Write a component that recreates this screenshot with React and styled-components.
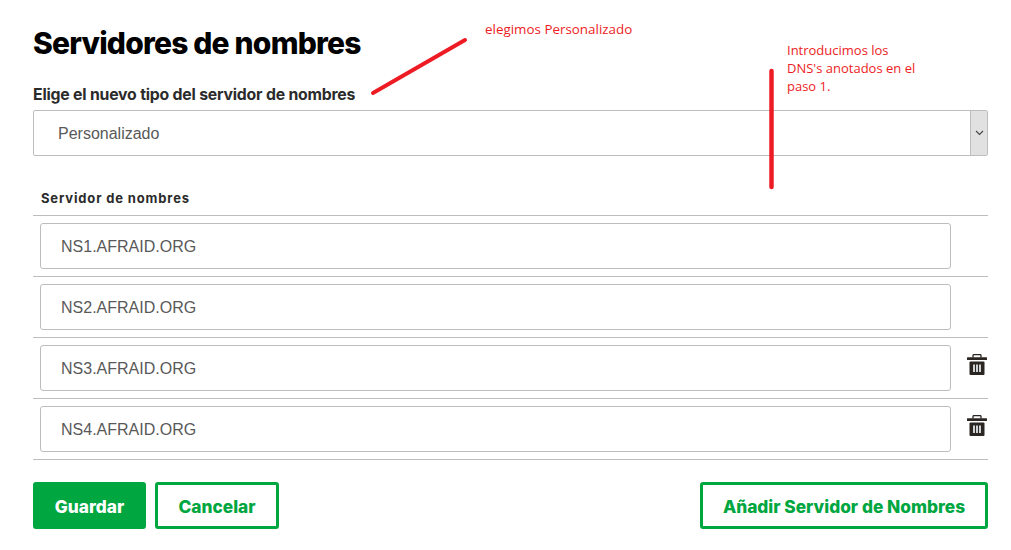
import React from 'react';
import styled, { createGlobalStyle } from 'styled-components';

const GlobalStyle = createGlobalStyle`
  html, body {
    margin: 0;
    background: #fff;
    overflow: hidden;
  }
`;

const Page = styled.div`
  position: relative;
  box-sizing: border-box;
  width: 1011px;
  height: 550px;
  padding: 24px 23px 0 33px;
  font-family: "Liberation Sans", Arial, sans-serif;
`;
const Title = styled.h1`
  margin: 0;
  height: 38px;
  font-family: Inter, sans-serif;
  font-size: 30px;
  line-height: 38px;
  font-weight: 800;
  letter-spacing: -0.8px;
  color: #000;
`;
const SelectLabel = styled.label`
  display: block;
  margin-top: 23px;
  height: 20px;
  font-family: Inter, sans-serif;
  font-size: 15.8px;
  line-height: 20px;
  font-weight: 700;
  letter-spacing: -0.2px;
  color: #2b2b2b;
`;
const SelectBox = styled.div`
  display: flex;
  align-items: stretch;
  box-sizing: border-box;
  height: 46px;
  margin-top: 5px;
  border: 1px solid #bdbdbd;
  border-radius: 2px;
`;
const SelectValue = styled.div`
  flex: 1;
  padding-left: 24px;
  font-size: 16px;
  line-height: 45px;
  color: #595959;
`;
const SelectArrow = styled.div`
  display: flex;
  align-items: center;
  justify-content: center;
  width: 16px;
  background: #e1e1e1;
  border-left: 1px solid #bdbdbd;
`;
const ColumnHead = styled.div`
  height: 27px;
  margin-top: 32px;
  padding-left: 8px;
  border-bottom: 1px solid #bdbdbd;
  font-family: Inter, sans-serif;
  font-size: 13px;
  line-height: 20px;
  font-weight: 700;
  letter-spacing: 0.85px;
  color: #2b2b2b;
`;
const Row = styled.div`
  display: flex;
  align-items: center;
  box-sizing: border-box;
  height: 61px;
  padding-left: 7px;
  border-bottom: 1px solid #bdbdbd;
`;
const NameInput = styled.input`
  box-sizing: border-box;
  width: 911px;
  height: 46px;
  padding: 2px 20px 0;
  border: 1px solid #bdbdbd;
  border-radius: 3px;
  outline: none;
  font-family: "Liberation Sans", Arial, sans-serif;
  font-size: 16px;
  color: #595959;
`;
const TrashButton = styled.button`
  display: flex;
  margin: 0 0 8px 16px;
  padding: 0;
  border: 0;
  background: none;
`;
const Actions = styled.div`
  display: flex;
  gap: 9px;
  margin-top: 22px;
`;
const Button = styled.button`
  box-sizing: border-box;
  width: ${(p) => p.$width}px;
  height: 47px;
  margin-left: ${(p) => (p.$push ? 'auto' : '0')};
  border: 3px solid #00a63f;
  border-radius: 3px;
  padding: 2px 0 0;
  background: ${(p) => (p.$primary ? '#00a63f' : '#fff')};
  color: ${(p) => (p.$primary ? '#fff' : '#00a63f')};
  font-family: Inter, sans-serif;
  font-size: 17.3px;
  font-weight: 800;
`;
const Note = styled.div`
  position: absolute;
  left: ${(p) => p.$left}px;
  top: ${(p) => p.$top}px;
  width: ${(p) => p.$width}px;
  font-family: "Open Sans", sans-serif;
  font-size: ${(p) => p.$size}px;
  line-height: 18px;
  color: #ed1c24;
`;
const Marks = styled.svg`
  position: absolute;
  left: 0;
  top: 0;
  pointer-events: none;
`;

const TrashIcon = () => (
  <svg width="20" height="21" viewBox="0 0 20 21">
    <path d="M6 3.5V1.6a1 1 0 0 1 1-1h6a1 1 0 0 1 1 1v1.9" fill="none" stroke="#2b2622" strokeWidth="1.3" />
    <rect x="0" y="3.2" width="20" height="2.8" rx="0.5" fill="#2b2622" />
    <rect x="2.5" y="7.5" width="15" height="13.5" rx="1" fill="#2b2622" />
    <rect x="6" y="10.5" width="2" height="7.5" fill="#cfd3d6" />
    <rect x="9" y="10.5" width="2" height="7.5" fill="#cfd3d6" />
    <rect x="12" y="10.5" width="2" height="7.5" fill="#cfd3d6" />
  </svg>
);

const servers = [
  { name: 'NS1.AFRAID.ORG', removable: false },
  { name: 'NS2.AFRAID.ORG', removable: false },
  { name: 'NS3.AFRAID.ORG', removable: true },
  { name: 'NS4.AFRAID.ORG', removable: true },
];

const App = () => {
  return (
    <Page>
      <GlobalStyle />
      <Title>Servidores de nombres</Title>
      <SelectLabel>Elige el nuevo tipo del servidor de nombres</SelectLabel>
      <SelectBox>
        <SelectValue>Personalizado</SelectValue>
        <SelectArrow>
          <svg width="9" height="6" viewBox="0 0 9 6">
            <path d="M1 1l3.5 3.5L8 1" fill="none" stroke="#444" strokeWidth="1.1" />
          </svg>
        </SelectArrow>
      </SelectBox>
      <ColumnHead>Servidor de nombres</ColumnHead>
      {servers.map((s) => (
        <Row key={s.name}>
          <NameInput readOnly value={s.name} />
          {s.removable && (
            <TrashButton>
              <TrashIcon />
            </TrashButton>
          )}
        </Row>
      ))}
      <Actions>
        <Button $primary $width={113}>Guardar</Button>
        <Button $width={124}>Cancelar</Button>
        <Button $push $width={288}>Añadir Servidor de Nombres</Button>
      </Actions>
      <Note $left={485} $top={20} $width={170} $size={13.4}>elegimos Personalizado</Note>
      <Note $left={787} $top={41} $width={135} $size={13}>
        Introducimos los DNS's anotados en el paso 1.
      </Note>
      <Marks width="1011" height="550">
        <line x1="373" y1="93" x2="465" y2="40" stroke="#ed1c24" strokeWidth="4" strokeLinecap="round" />
        <line x1="771.5" y1="71" x2="771.5" y2="187" stroke="#ed1c24" strokeWidth="4.5" strokeLinecap="round" />
      </Marks>
    </Page>
  );
};

export default App;
